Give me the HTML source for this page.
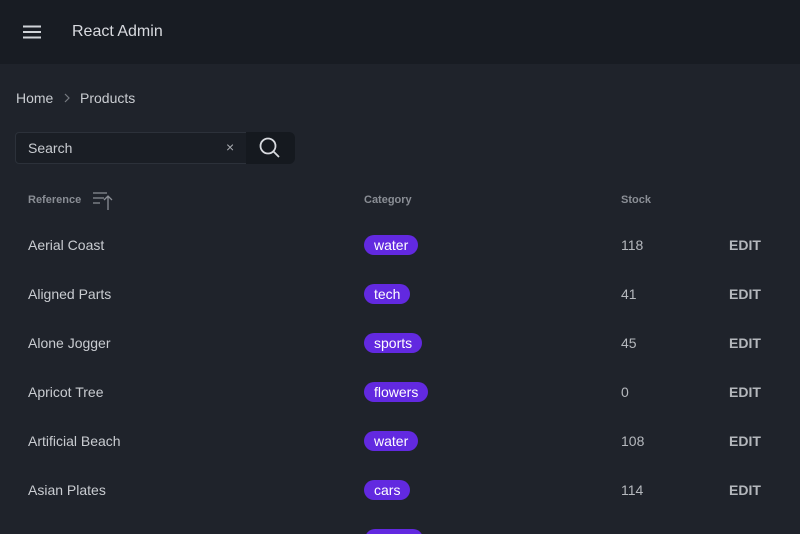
<!DOCTYPE html>
<html><head><style>
*{margin:0;padding:0;box-sizing:border-box}
html{width:800px;height:534px;overflow:hidden}
body{width:800px;height:534px;overflow:hidden;background:#1f232b;font-family:"Liberation Sans",sans-serif;color:#d0d3d8;position:relative}
.hdr{position:absolute;left:0;top:0;width:800px;height:64px;background:#181c23}
.ab{position:absolute;font-size:15px}
.chip{position:absolute;height:20px;border-radius:10px;background:#6229e0;color:#fff;font-size:14px;line-height:20px;padding:0 10px}
.name{position:absolute;left:28px;font-size:14px;color:#c9ccd1}
.num{position:absolute;left:621px;font-size:14px;color:#b5b8bd}
.edit{position:absolute;left:729px;font-size:14px;font-weight:bold;color:#b5b8bd}
.th{position:absolute;top:194px;font-size:11px;font-weight:bold;color:#8a8e95}
</style></head><body>
<div class="hdr">
<svg style="position:absolute;left:22px;top:24px" width="20" height="16"><path d="M1 2.5H19M1 8H19M1 13.5H19" stroke="#d0d3d8" stroke-width="2"/></svg>
<div class="ab" style="left:72px;top:23px;font-size:16px;color:#d8dadf">React Admin</div>
</div>
<div class="ab" style="left:16px;top:90px;font-size:14px;color:#c9ccd1">Home</div>
<svg style="position:absolute;left:63px;top:93px" width="8" height="10"><path d="M2 1L6 5L2 9" stroke="#777b82" fill="none" stroke-width="1.2"/></svg>
<div class="ab" style="left:80px;top:90px;font-size:14px;color:#c9ccd1">Products</div>
<div style="position:absolute;left:15px;top:132px;width:232px;height:32px;border:1px solid #2c313a;background:#1a1e25;border-radius:4px 0 0 4px"></div>
<div class="ab" style="left:28px;top:140px;font-size:14px;color:#c9ccd1">Search</div>
<div class="ab" style="left:226px;top:139px;font-size:14px;color:#a8abb0">×</div>
<div style="position:absolute;left:246px;top:132px;width:49px;height:32px;background:#15191f;border-radius:0 6px 6px 0"></div>
<svg style="position:absolute;left:259px;top:137px" width="22" height="22"><circle cx="9" cy="9" r="7.5" stroke="#d8dadf" stroke-width="1.8" fill="none"/><path d="M14.5 14.5L20 20" stroke="#d8dadf" stroke-width="1.8"/></svg>
<div class="th" style="left:28px">Reference</div>
<svg style="position:absolute;left:92px;top:191px" width="22" height="20"><path d="M1 2H15M1 7H12M1 12H8" stroke="#8a8e95" stroke-width="1.3"/><path d="M16 19V5M12 9L16 5L20 9" stroke="#8a8e95" stroke-width="1.3" fill="none"/></svg>
<div class="th" style="left:364px">Category</div>
<div class="th" style="left:621px">Stock</div>

<div class="name" style="top:237px">Aerial Coast</div><div class="chip" style="left:364px;top:235px">water</div><div class="num" style="top:237px">118</div><div class="edit" style="top:237px">EDIT</div>
<div class="name" style="top:286px">Aligned Parts</div><div class="chip" style="left:364px;top:284px">tech</div><div class="num" style="top:286px">41</div><div class="edit" style="top:286px">EDIT</div>
<div class="name" style="top:335px">Alone Jogger</div><div class="chip" style="left:364px;top:333px">sports</div><div class="num" style="top:335px">45</div><div class="edit" style="top:335px">EDIT</div>
<div class="name" style="top:384px">Apricot Tree</div><div class="chip" style="left:364px;top:382px">flowers</div><div class="num" style="top:384px">0</div><div class="edit" style="top:384px">EDIT</div>
<div class="name" style="top:433px">Artificial Beach</div><div class="chip" style="left:364px;top:431px">water</div><div class="num" style="top:433px">108</div><div class="edit" style="top:433px">EDIT</div>
<div class="name" style="top:482px">Asian Plates</div><div class="chip" style="left:364px;top:480px">cars</div><div class="num" style="top:482px">114</div><div class="edit" style="top:482px">EDIT</div>
<div class="name" style="top:531px">Atomic Clock</div><div class="chip" style="left:365px;top:529px;width:58px"></div>
</body></html>
